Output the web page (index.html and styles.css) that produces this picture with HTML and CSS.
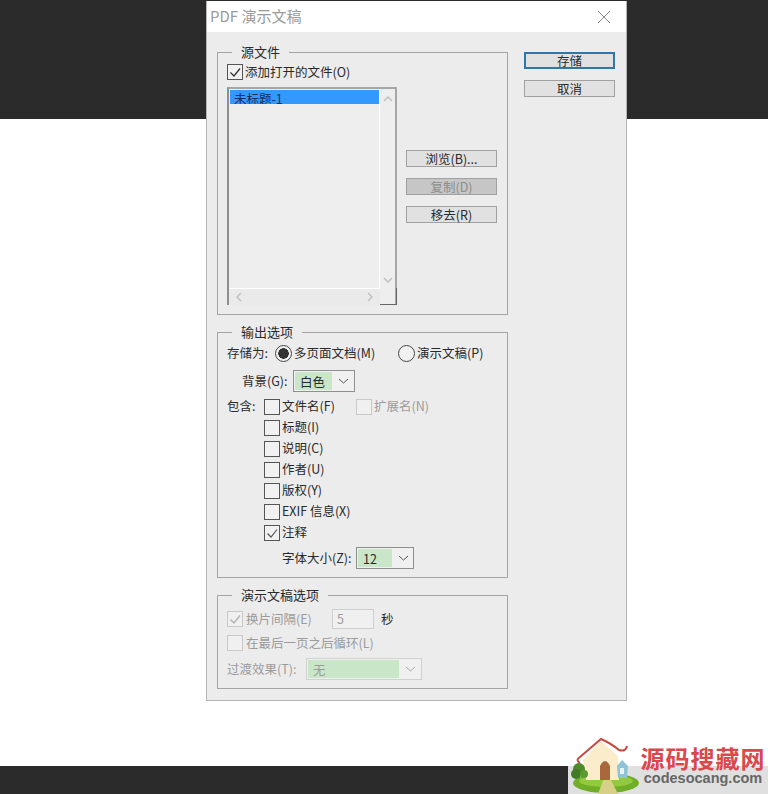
FILE: index.html
```html
<!DOCTYPE html>
<html lang="zh-CN">
<head>
    <meta charset="UTF-8">
    <title>PDF 演示文稿</title>
    <link rel="stylesheet" href="styles.css">
</head>
<body>
    <div class="backdrop">
        <div class="band-top"></div>
        <div class="band-mid"></div>
        <div class="band-bottom"></div>
    </div>

    <div class="dialog">
        <div class="title-bar">
            <span class="title">PDF 演示文稿</span>
            <svg class="close" width="14" height="14" viewBox="0 0 14 14"><path d="M1 1 L13 13 M13 1 L1 13" stroke="#8a8a8a" stroke-width="1" fill="none"/></svg>
        </div>

        <div class="dialog-body">
            <div class="left-col">
                <!-- Source files -->
                <div class="group group-source">
                    <span class="legend">源文件</span>
                    <div class="row">
                        <span class="check"><svg width="14" height="14" viewBox="0 0 14 14"><path d="M2.5 7.5 L6 11 L12 3.5" stroke="#333" stroke-width="1.3" fill="none"/></svg></span>
                        <span>添加打开的文件(O)</span>
                    </div>
                    <div class="source-main">
                        <div class="listbox">
                            <div class="list-items"><div class="list-item">未标题-1</div></div>
                            <div class="vscroll">
                                <svg width="10" height="6" viewBox="0 0 10 6"><path d="M1 5 L5 1 L9 5" stroke="#c0c0c0" stroke-width="1.5" fill="none"/></svg>
                                <svg width="10" height="6" viewBox="0 0 10 6"><path d="M1 1 L5 5 L9 1" stroke="#c0c0c0" stroke-width="1.5" fill="none"/></svg>
                            </div>
                            <div class="hscroll">
                                <svg width="6" height="10" viewBox="0 0 6 10"><path d="M5 1 L1 5 L5 9" stroke="#c0c0c0" stroke-width="1.5" fill="none"/></svg>
                                <svg width="6" height="10" viewBox="0 0 6 10"><path d="M1 1 L5 5 L1 9" stroke="#c0c0c0" stroke-width="1.5" fill="none"/></svg>
                            </div>
                            <div class="corner"></div>
                        </div>
                        <div class="source-buttons">
                            <div class="btn">浏览(B)...</div>
                            <div class="btn btn-disabled">复制(D)</div>
                            <div class="btn">移去(R)</div>
                        </div>
                    </div>
                </div>

                <!-- Output options -->
                <div class="group group-output">
                    <span class="legend">输出选项</span>
                    <div class="row saveas-row">
                        <span class="saveas-label">存储为:</span>
                        <span class="radio radio-on"></span>
                        <span class="radio-text">多页面文档(M)</span>
                        <span class="radio"></span>
                        <span>演示文稿(P)</span>
                    </div>
                    <div class="row bg-row">
                        <span class="bg-label">背景(G):</span>
                        <div class="select select-bg">
                            <span class="select-value">白色</span>
                            <svg width="11" height="6" viewBox="0 0 11 6"><path d="M1 1 L5.5 5 L10 1" stroke="#555" stroke-width="1" fill="none"/></svg>
                        </div>
                    </div>
                    <div class="include">
                        <span class="include-label">包含:</span>
                        <div class="include-list">
                            <div class="row include-row">
                                <span class="check"></span><span class="file-name">文件名(F)</span>
                                <span class="check check-disabled"></span><span class="muted">扩展名(N)</span>
                            </div>
                            <div class="row include-row"><span class="check"></span><span>标题(I)</span></div>
                            <div class="row include-row"><span class="check"></span><span>说明(C)</span></div>
                            <div class="row include-row"><span class="check"></span><span>作者(U)</span></div>
                            <div class="row include-row"><span class="check"></span><span>版权(Y)</span></div>
                            <div class="row include-row"><span class="check"></span><span>EXIF 信息(X)</span></div>
                            <div class="row include-row">
                                <span class="check"><svg width="14" height="14" viewBox="0 0 14 14"><path d="M2.5 7.5 L6 11 L12 3.5" stroke="#555" stroke-width="1.2" fill="none"/></svg></span>
                                <span>注释</span>
                            </div>
                        </div>
                    </div>
                    <div class="row font-row">
                        <span class="font-label">字体大小(Z):</span>
                        <div class="select select-font">
                            <span class="select-value">12</span>
                            <svg width="11" height="6" viewBox="0 0 11 6"><path d="M1 1 L5.5 5 L10 1" stroke="#555" stroke-width="1" fill="none"/></svg>
                        </div>
                    </div>
                </div>

                <!-- Presentation options -->
                <div class="group group-present">
                    <span class="legend">演示文稿选项</span>
                    <div class="row interval-row">
                        <span class="check check-disabled"><svg width="14" height="14" viewBox="0 0 14 14"><path d="M2.5 7.5 L6 11 L12 3.5" stroke="#b5b5b5" stroke-width="1.5" fill="none"/></svg></span>
                        <span class="muted interval-label">换片间隔(E)</span>
                        <span class="text-input">5</span>
                        <span>秒</span>
                    </div>
                    <div class="row loop-row">
                        <span class="check check-disabled"></span>
                        <span class="muted">在最后一页之后循环(L)</span>
                    </div>
                    <div class="row transition-row">
                        <span class="muted transition-label">过渡效果(T):</span>
                        <div class="select select-transition">
                            <span class="select-value">无</span>
                            <svg width="11" height="6" viewBox="0 0 11 6"><path d="M1 1 L5.5 5 L10 1" stroke="#aaa" stroke-width="1" fill="none"/></svg>
                        </div>
                    </div>
                </div>
            </div>

            <div class="right-col">
                <div class="btn btn-primary">存储</div>
                <div class="btn">取消</div>
            </div>
        </div>
    </div>

    <!-- Watermark -->
    <div class="watermark">
        <svg class="watermark-art" width="72" height="58" viewBox="0 0 72 58">
            <ellipse cx="38" cy="47" rx="33" ry="10" fill="#6fae26"/>
            <ellipse cx="38" cy="45" rx="27" ry="6" fill="#93c93c"/>
            <path d="M30 58 L36 42 L42 42 L50 58 Z" fill="#d8cf8a"/>
            <path d="M15 24 L33 5 L50 20 L51 44 L18 44 Z" fill="#fbeccb"/>
            <path d="M32 44 L32 30 Q37 20 42 30 L42 44 Z" fill="#a8683a"/>
            <path d="M49 30 L54 24 L60 30 L59 42 L50 42 Z" fill="#8fc4d8"/>
            <rect x="52" y="32" width="4" height="6" fill="#e9f4f8"/>
            <path d="M12 27 Q7 24 12 21 L33 3 Q44 8 51 14 Q58 16 59 10" stroke="#c9483f" stroke-width="2" fill="none"/>
            <circle cx="11" cy="33" r="6" fill="#4f8a2a"/>
            <circle cx="8" cy="38" r="5" fill="#3f7a24"/>
            <circle cx="16" cy="38" r="4" fill="#5b9a30"/>
        </svg>
        <div class="watermark-text">
            <div class="watermark-cn">源码搜藏网</div>
            <div class="watermark-en">codesocang.com</div>
        </div>
    </div>
</body>
</html>
```
FILE: styles.css
```css
html, body {
    margin: 0;
    height: 794px;
    overflow: hidden;
}

body {
    font-family: "Noto Sans CJK SC", "Liberation Sans", sans-serif;
    font-size: 12.5px;
    line-height: 17px;
    color: #2a2a2a;
    background-color: #fff;
    position: relative;
}

.backdrop {
    display: flex;
    flex-direction: column;
    height: 794px;
}

.band-top {
    height: 119px;
    background-color: #2b2b2b;
}

.band-mid {
    flex: 1;
    background-color: #fff;
}

.band-bottom {
    height: 28px;
    background-color: #2b2b2b;
}

.dialog {
    position: absolute;
    left: 206px;
    top: 1px;
    width: 421px;
    height: 700px;
    box-sizing: border-box;
    background-color: #ececec;
    border: 1px solid #b5b5b5;
    border-top: none;
}

.title-bar {
    height: 31px;
    background-color: #fff;
    display: flex;
    align-items: center;
    justify-content: space-between;
    padding: 0 15px 0 3px;
}

.title {
    font-size: 15px;
    color: #9a9a9a;
    margin-bottom: 2px;
}

.dialog-body {
    display: flex;
    gap: 16px;
    padding: 20px 0 0 10px;
}

.left-col {
    width: 291px;
    display: flex;
    flex-direction: column;
    gap: 17px;
}

.right-col {
    width: 91px;
    display: flex;
    flex-direction: column;
    gap: 11px;
}

.group {
    position: relative;
    box-sizing: border-box;
    border: 1px solid #a4a4a4;
    padding: 0 9px;
}

.legend {
    position: absolute;
    top: -10px;
    left: 14px;
    padding: 0 9px;
    font-size: 13px;
    background-color: #ececec;
}

.group-source {
    height: 263px;
    padding-top: 10px;
}

.group-source .row {
    height: 18px;
}

.group-output {
    height: 246px;
    padding-top: 10px;
}

.group-present {
    height: 94px;
    padding-top: 13px;
}

.group-present .check {
    margin-right: 3px;
}

.row {
    display: flex;
    align-items: center;
}

/* text sits a pixel above the centre of its row */
.row > span {
    margin-bottom: 2px;
}

.row > .check,
.row > .radio,
.row > .text-input {
    margin-bottom: 0;
}

.check {
    width: 16px;
    height: 16px;
    flex: none;
    box-sizing: border-box;
    border: 1px solid #555;
    background-color: #f1f1f1;
    margin-right: 2px;
    display: flex;
    align-items: center;
    justify-content: center;
}

.check-disabled {
    border-color: #c9c9c9;
    background-color: #f0f0f0;
}

.muted {
    color: #9b9b9b;
}

.btn {
    box-sizing: border-box;
    height: 17px;
    line-height: 15px;
    border: 1px solid #a0a0a0;
    background-color: #e1e1e1;
    text-align: center;
}

.btn-primary {
    border: 2px solid #2f77ab;
    line-height: 13px;
}

.btn-disabled {
    background-color: #c6c6c6;
    color: #8c8c8c;
}

/* source files list */
.source-main {
    display: flex;
    margin-top: 6px;
}

.listbox {
    width: 170px;
    height: 218px;
    box-sizing: border-box;
    display: grid;
    grid-template-columns: 1fr 15px;
    grid-template-rows: 1fr 17px;
    border-top: 2px solid #a6a6a6;
    border-left: 2px solid #8f8f8f;
    border-right: 2px solid #a6a6a6;
    background-color: #eeeeee;
}

.list-items {
    padding: 1px 0 1px 1px;
    border-right: 1px solid #fff;
    overflow: hidden;
}

.list-item {
    height: 14px;
    line-height: 18px;
    padding-left: 4px;
    background-color: #3399ff;
    color: #12305a;
    overflow: hidden;
}

.vscroll {
    display: flex;
    flex-direction: column;
    align-items: center;
    justify-content: space-between;
    padding: 7px 0 5px;
}

.hscroll {
    display: flex;
    align-items: center;
    justify-content: space-between;
    padding: 0 7px;
    border-top: 1px solid #fff;
    background-color: #eaeaea;
}

.corner {
    border-right: 1px solid #666;
    border-bottom: 1px solid #666;
    margin-right: -2px;
}

.source-buttons {
    width: 91px;
    margin-left: 9px;
    padding-top: 63px;
    display: flex;
    flex-direction: column;
    gap: 11px;
}

/* output options */
.saveas-row {
    height: 21px;
}

.saveas-label {
    width: 48px;
}

.radio {
    width: 17px;
    height: 17px;
    flex: none;
    box-sizing: border-box;
    border: 1px solid #444;
    border-radius: 50%;
    background-color: #f1f1f1;
    margin-right: 2px;
}

.radio-on {
    background: radial-gradient(circle, #333 0 5px, #f1f1f1 5.5px);
}

.radio-text {
    width: 104px;
}

.bg-row {
    margin-top: 6px;
    padding-left: 15px;
}

.bg-label {
    width: 51px;
}

.select {
    box-sizing: border-box;
    height: 22px;
    display: flex;
    align-items: center;
    border: 1px solid #8f8f8f;
    background-color: #f0f0f0;
    padding: 1px;
}

.select-value {
    align-self: stretch;
    background-color: #c9e6c9;
    padding-left: 5px;
    line-height: 20px;
}

.select svg {
    margin-left: 6px;
}

.select-bg {
    width: 62px;
}

.select-bg .select-value {
    width: 32px;
}

.include {
    display: flex;
    margin-top: 4px;
}

.include-label {
    width: 37px;
    line-height: 19px;
}

.include-row {
    height: 21px;
}

.file-name {
    width: 74px;
}

.font-row {
    margin-top: 4px;
    padding-left: 55px;
}

.font-label {
    width: 74px;
}

.select-font {
    width: 58px;
}

.select-font .select-value {
    width: 29px;
}

/* presentation options */
.interval-row {
    height: 20px;
}

.interval-label {
    width: 86px;
}

.text-input {
    box-sizing: border-box;
    width: 42px;
    height: 20px;
    line-height: 18px;
    border: 1px solid #cfcfcf;
    background-color: #f0f0f0;
    color: #9b9b9b;
    padding-left: 4px;
    margin-right: 7px;
}

.loop-row {
    height: 20px;
    margin-top: 4px;
}

.transition-row {
    margin-top: 5px;
}

.transition-label {
    width: 79px;
}

.select-transition {
    width: 116px;
    border-color: #d0d0d0;
    color: #9b9b9b;
}

.select-transition .select-value {
    width: 86px;
}

/* watermark */
.watermark {
    position: absolute;
    right: 0;
    bottom: 0;
    width: 200px;
    height: 58px;
    display: flex;
    background: linear-gradient(#fff 0 30px, #e0e0e0 30px);
}

.watermark-text {
    padding-top: 9px;
    text-align: center;
    width: 126px;
}

.watermark-cn {
    font-size: 24px;
    line-height: 26px;
    font-weight: 700;
    color: #d8484c;
    letter-spacing: 1px;
}

.watermark-en {
    font-family: "Liberation Sans", sans-serif;
    font-size: 14.5px;
    line-height: 15px;
    font-weight: 700;
    color: #666;
}
```
